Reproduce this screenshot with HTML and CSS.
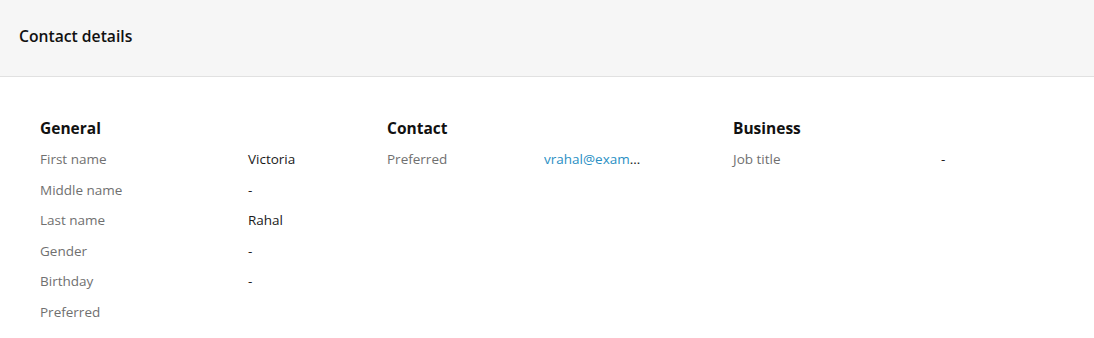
FILE: index.html
```html
<!DOCTYPE html>
<html>
<head>
<meta charset="utf-8">
<link rel="stylesheet" href="styles.css">
</head>
<body>
<div class="header"><h1 class="title">Contact details</h1></div>
<div class="sections">
  <section class="section">
    <h2 class="section-title">General</h2>
    <div class="row"><span class="label">First name</span><span class="value">Victoria</span></div>
    <div class="row"><span class="label">Middle name</span><span class="value">-</span></div>
    <div class="row"><span class="label">Last name</span><span class="value">Rahal</span></div>
    <div class="row"><span class="label">Gender</span><span class="value">-</span></div>
    <div class="row"><span class="label">Birthday</span><span class="value">-</span></div>
    <div class="row"><span class="label">Preferred</span><span class="value"></span></div>
  </section>
  <section class="section">
    <h2 class="section-title">Contact</h2>
    <div class="row contact-row"><span class="label">Preferred</span><span class="value trunc"><a class="link" href="#">vrahal@example.com</a></span></div>
  </section>
  <section class="section">
    <h2 class="section-title">Business</h2>
    <div class="row"><span class="label">Job title</span><span class="value">-</span></div>
  </section>
</div>
</body>
</html>
```
FILE: styles.css
```css
* { box-sizing: border-box; }
body {
  margin: 0;
  font-family: "Open Sans", "Noto Sans", sans-serif;
  color: #1a1a1a;
  background: #fff;
}
.header {
  height: 77px;
  background: #f6f6f6;
  border-bottom: 1px solid #e1e1e1;
  padding: 0 19px;
  display: flex;
  align-items: center;
}
.title {
  margin: 0;
  font-size: 15.7px;
  font-weight: 600;
  color: #111;
  position: relative;
  top: -2px;
}
.sections {
  display: grid;
  grid-template-columns: 347px 346px 1fr;
  padding: 39px 40px 0 40px;
}
.section-title {
  margin: 0 0 4px 0;
  font-size: 15.5px;
  font-weight: 700;
  color: #111;
  line-height: 24px;
}
.row {
  display: grid;
  grid-template-columns: 208px 1fr;
  height: 30.5px;
  align-items: center;
  font-size: 13.5px;
}
.contact-row { grid-template-columns: 157px 100px; }
.label { color: #707070; }
.value { color: #1a1a1a; }
.trunc {
  white-space: nowrap;
  overflow: hidden;
  text-overflow: ellipsis;
}
.link { color: #2a8fc4; text-decoration: none; }
```
